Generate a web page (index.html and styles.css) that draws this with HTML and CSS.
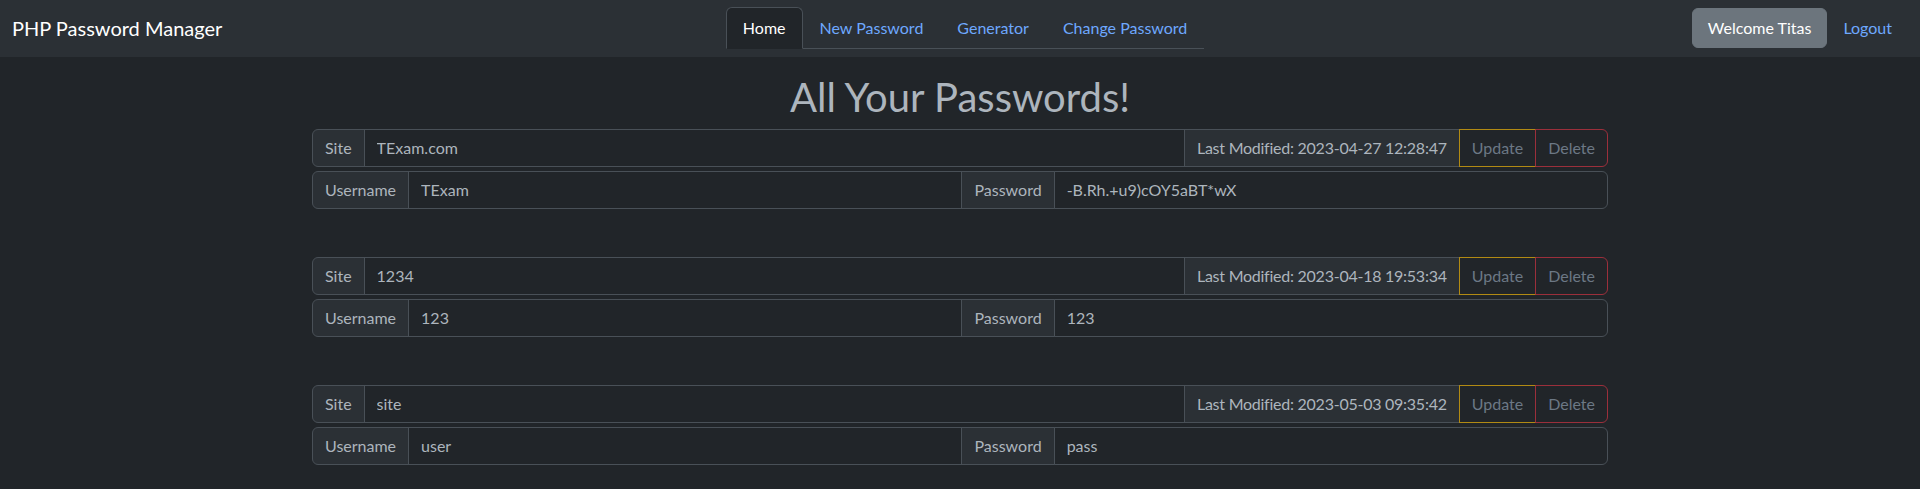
FILE: index.html
```html
<!DOCTYPE html>
<html lang="en">
<head>
<meta charset="utf-8">
<title>PHP Password Manager</title>
<link rel="stylesheet" href="styles.css">
</head>
<body>
<nav class="navbar">
  <a class="brand" href="#">PHP Password Manager</a>
  <ul class="tabs">
    <li><a class="tab active" href="#">Home</a></li>
    <li><a class="tab" href="#">New Password</a></li>
    <li><a class="tab" href="#">Generator</a></li>
    <li><a class="tab" href="#">Change Password</a></li>
  </ul>
  <div class="user">
    <span class="welcome">Welcome Titas</span>
    <a class="logout" href="#">Logout</a>
  </div>
</nav>

<main class="container">
  <h1 class="title">All Your Passwords!</h1>

  <section class="entry">
    <div class="group">
      <span class="label">Site</span>
      <input class="field" type="text" value="TExam.com" readonly>
      <span class="label stamp">Last Modified: 2023-04-27 12:28:47</span>
      <button class="btn update" disabled>Update</button>
      <button class="btn delete" disabled>Delete</button>
    </div>
    <div class="group">
      <span class="label">Username</span>
      <input class="field" type="text" value="TExam" readonly>
      <span class="label">Password</span>
      <input class="field" type="text" value="-B.Rh.+u9)cOY5aBT*wX" readonly>
    </div>
  </section>

  <section class="entry">
    <div class="group">
      <span class="label">Site</span>
      <input class="field" type="text" value="1234" readonly>
      <span class="label stamp">Last Modified: 2023-04-18 19:53:34</span>
      <button class="btn update" disabled>Update</button>
      <button class="btn delete" disabled>Delete</button>
    </div>
    <div class="group">
      <span class="label">Username</span>
      <input class="field" type="text" value="123" readonly>
      <span class="label">Password</span>
      <input class="field" type="text" value="123" readonly>
    </div>
  </section>

  <section class="entry">
    <div class="group">
      <span class="label">Site</span>
      <input class="field" type="text" value="site" readonly>
      <span class="label stamp">Last Modified: 2023-05-03 09:35:42</span>
      <button class="btn update" disabled>Update</button>
      <button class="btn delete" disabled>Delete</button>
    </div>
    <div class="group">
      <span class="label">Username</span>
      <input class="field" type="text" value="user" readonly>
      <span class="label">Password</span>
      <input class="field" type="text" value="pass" readonly>
    </div>
  </section>
</main>
</body>
</html>
```
FILE: styles.css
```css
* { box-sizing: border-box; }

body {
  margin: 0;
  background: #212529;
  color: #adb5bd;
  font-family: Lato, "Noto Sans", sans-serif;
  font-size: 16px;
  line-height: 1.5;
}

a { text-decoration: none; }

/* ---------- navbar ---------- */
.navbar {
  display: flex;
  align-items: center;
  padding: 7px 12px 8px;
  background: #2b3035;
}

.brand {
  font-size: 20px;
  line-height: 30px;
  color: #fff;
  margin-right: 16px;
  white-space: nowrap;
}

.tabs {
  display: flex;
  list-style: none;
  margin: 0 auto;
  padding: 0;
  border-bottom: 1px solid #495057;
}

.tabs li { margin-bottom: -1px; }

.tab {
  display: block;
  padding: 8px 16px;
  line-height: 24px;
  color: #6ea8fe;
  border: 1px solid transparent;
  border-radius: 6px 6px 0 0;
}

.tab.active {
  color: #fff;
  background: #212529;
  border-color: #495057 #495057 #212529;
}

.user {
  display: flex;
  align-items: center;
}

.welcome {
  display: block;
  padding: 7px 15px;
  line-height: 24px;
  color: #fff;
  background: #6c757d;
  border: 1px solid #6c757d;
  border-radius: 6px;
}

.logout {
  display: block;
  padding: 8px 16px;
  line-height: 24px;
  color: #6ea8fe;
}

/* ---------- content ---------- */
.container {
  max-width: 1320px;
  margin: 16px auto 0;
  padding: 0 12px;
}

.title {
  margin: 0 0 8px;
  font-size: 40px;
  font-weight: 400;
  line-height: 1.2;
  text-align: center;
  color: #adb5bd;
}

.entry {
  display: flex;
  flex-direction: column;
  gap: 4px;
  margin-bottom: 48px;
}

.group {
  display: flex;
  align-items: stretch;
}

.group > * + * { margin-left: -1px; }

.label {
  display: flex;
  align-items: center;
  padding: 6px 12px;
  line-height: 24px;
  white-space: nowrap;
  color: #adb5bd;
  background: #2b3035;
  border: 1px solid #495057;
}

.stamp { letter-spacing: -0.25px; }

.field {
  flex: 1 1 auto;
  width: 1%;
  min-width: 0;
  padding: 6px 12px;
  font: inherit;
  line-height: 24px;
  color: #adb5bd;
  background: #212529;
  border: 1px solid #495057;
  outline: none;
}

.btn {
  padding: 6px 12px;
  font: inherit;
  line-height: 24px;
  color: #6c7885;
  background: transparent;
  border: 1px solid;
  position: relative;
}

.update { border-color: #b18a13; }
.delete { border-color: #9b2f3b; }

.group > :first-child { border-radius: 6px 0 0 6px; }
.group > :last-child { border-radius: 0 6px 6px 0; }
```
